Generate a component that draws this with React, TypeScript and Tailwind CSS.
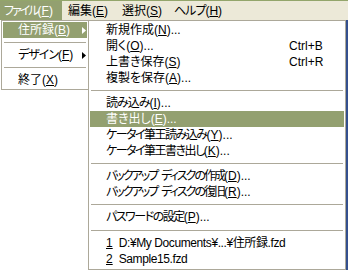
import React from "react";

function Acc({
  pre,
  k,
  post,
  tr,
}: {
  pre: string;
  k: string;
  post?: string;
  tr?: string;
}) {
  return (
    <span className="whitespace-nowrap">
      <span className={tr ?? ""}>{pre}</span>(
      <span className="underline underline-offset-1">{k}</span>){post ?? ""}
    </span>
  );
}

function Arrow({ white }: { white?: boolean }) {
  return (
    <svg width="4" height="7" viewBox="0 0 4 7" className="block">
      <path d="M0 0 L4 3.5 L0 7 Z" fill={white ? "#ffffff" : "#000000"} />
    </svg>
  );
}

function Sep({ h10 }: { h10?: boolean }) {
  return (
    <div className={`${h10 ? "h-[10px]" : "h-[9px]"} flex items-center px-[2px]`}>
      <div className="h-px w-full bg-[#aca899]" />
    </div>
  );
}

function Item({
  children,
  shortcut,
  active,
}: {
  children: React.ReactNode;
  shortcut?: string;
  active?: boolean;
}) {
  return (
    <div
      className={`h-4 mx-[1px] flex items-center pl-[16px] ${
        active ? "bg-[#93a070] text-white" : "text-black"
      }`}
    >
      <div className="flex-1 whitespace-nowrap">{children}</div>
      {shortcut && <div className="w-[55px] whitespace-nowrap">{shortcut}</div>}
    </div>
  );
}

function Backup({ label, k }: { label: string; k: string }) {
  return (
    <span className="whitespace-nowrap">
      <span className="tracking-[-2px]">バックアップ</span>
      <span className="ml-[4px] tracking-[-2px]">{label}</span>(
      <span className="underline underline-offset-1">{k}</span>)...
    </span>
  );
}

export default function App() {
  return (
    <div
      className="w-[348px] h-[270px] bg-white overflow-hidden text-[12px] leading-none font-['Liberation_Sans','Noto_Sans_CJK_JP',sans-serif]"
      style={{ fontFeatureSettings: '"palt" 1' }}
    >
      {/* Menu bar */}
      <div className="h-5 bg-[#ece9d8] border-t border-[#93a56b] flex items-stretch">
        <div className="w-[62px] bg-[#93a070] text-white flex items-center pl-[4px] whitespace-nowrap overflow-hidden">
          <Acc pre="ファイル" k="F" tr="tracking-[-2px]" />
        </div>
        <div className="flex items-center pl-[6px] w-[60px]">
          <Acc pre="編集" k="E" />
        </div>
        <div className="flex items-center w-[52px]">
          <Acc pre="選択" k="S" />
        </div>
        <div className="flex items-center">
          <Acc pre="ヘルプ" k="H" tr="tracking-[-1px]" />
        </div>
      </div>

      <div className="flex items-start">
        {/* Left menu */}
        <div className="ml-px w-[87px] h-[70px] bg-white border border-r-0 border-[#aca899] pt-px">
          <div className="h-4 mx-[1px] flex items-center justify-between pl-[15px] pr-[1px] bg-[#93a070] text-white">
            <Acc pre="住所録" k="B" />
            <Arrow white />
          </div>
          <Sep />
          <div className="h-4 mx-[1px] flex items-center justify-between pl-[15px] pr-[1px]">
            <Acc pre="デザイン" k="F" tr="tracking-[-1px]" />
            <Arrow />
          </div>
          <Sep />
          <div className="h-4 mx-[1px] flex items-center pl-[15px]">
            <Acc pre="終了" k="X" />
          </div>
        </div>

        {/* Submenu */}
        <div className="w-[258px] h-[250px] bg-white border border-[#aca899] pt-px">
          <Item>
            <Acc pre="新規作成" k="N" post="..." />
          </Item>
          <Item shortcut="Ctrl+B">
            <Acc pre="開く" k="O" post="..." />
          </Item>
          <Item shortcut="Ctrl+R">
            <Acc pre="上書き保存" k="S" />
          </Item>
          <Item>
            <Acc pre="複製を保存" k="A" post="..." />
          </Item>
          <Sep />
          <Item>
            <Acc pre="読み込み" k="I" post="..." tr="tracking-[-1px]" />
          </Item>
          <Item active>
            <Acc pre="書き出し" k="E" post="..." />
          </Item>
          <Item>
            <Acc pre="ケータイ筆王読み込み" k="Y" post="..." tr="tracking-[-1.5px]" />
          </Item>
          <Item>
            <Acc pre="ケータイ筆王書き出し" k="K" post="..." tr="tracking-[-1.5px]" />
          </Item>
          <Sep />
          <Item>
            <Backup label="ディスクの作成" k="D" />
          </Item>
          <Item>
            <Backup label="ディスクの復旧" k="R" />
          </Item>
          <Sep />
          <Item>
            <Acc pre="パスワードの設定" k="P" post="..." tr="tracking-[-1.5px]" />
          </Item>
          <Sep h10 />
          <Item>
            <span className="whitespace-nowrap">
              <span className="underline underline-offset-1">1</span>
              <span className="ml-[6px] tracking-[-0.4px]">D:¥My Documents¥...¥住所録.fzd</span>
            </span>
          </Item>
          <Item>
            <span className="whitespace-nowrap">
              <span className="underline underline-offset-1">2</span>
              <span className="ml-[6px] tracking-[-0.4px]">Sample15.fzd</span>
            </span>
          </Item>
        </div>

        {/* Window behind */}
        <div className="flex-1 h-[250px] bg-[#34508e]" />
      </div>
    </div>
  );
}
